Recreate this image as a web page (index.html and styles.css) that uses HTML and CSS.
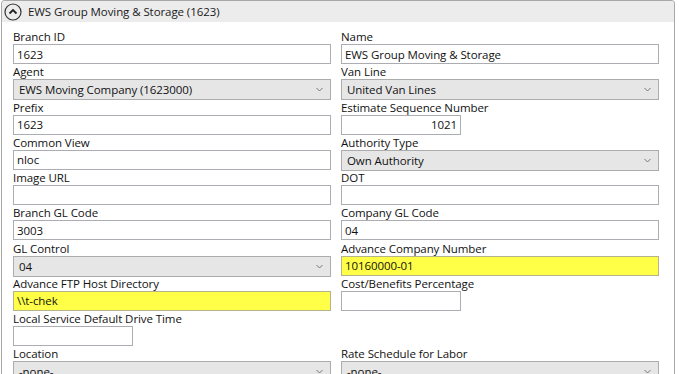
FILE: index.html
```html
<!DOCTYPE html>
<html lang="en">
<head>
    <meta charset="UTF-8">
    <title>Branch - EWS Group Moving &amp; Storage</title>
    <link rel="stylesheet" href="styles.css">
</head>
<body>
    <div class="panel">
        <div class="panel-header">
            <svg class="collapse-icon" width="18" height="18" viewBox="0 0 18 18">
                <circle cx="9" cy="9" r="8" fill="none" stroke="#333" stroke-width="1.2"/>
                <path d="M5.5 10.5 L9 7 L12.5 10.5" fill="none" stroke="#222" stroke-width="1.8"/>
            </svg>
            <span class="panel-title">EWS Group Moving &amp; Storage (1623)</span>
        </div>

        <div class="form-grid">
            <div class="field">
                <label>Branch ID</label>
                <input type="text" value="1623">
            </div>
            <div class="field">
                <label>Name</label>
                <input type="text" value="EWS Group Moving &amp; Storage">
            </div>

            <div class="field">
                <label>Agent</label>
                <div class="combo"><span>EWS Moving Company (1623000)</span><svg width="7" height="5" viewBox="0 0 7 5"><path d="M0.5 1 L3.5 4 L6.5 1" fill="none" stroke="#777" stroke-width="1"/></svg></div>
            </div>
            <div class="field">
                <label>Van Line</label>
                <div class="combo"><span>United Van Lines</span><svg width="7" height="5" viewBox="0 0 7 5"><path d="M0.5 1 L3.5 4 L6.5 1" fill="none" stroke="#777" stroke-width="1"/></svg></div>
            </div>

            <div class="field">
                <label>Prefix</label>
                <input type="text" value="1623">
            </div>
            <div class="field">
                <label>Estimate Sequence Number</label>
                <input type="text" class="short number" value="1021">
            </div>

            <div class="field">
                <label>Common View</label>
                <input type="text" value="nloc">
            </div>
            <div class="field">
                <label>Authority Type</label>
                <div class="combo"><span>Own Authority</span><svg width="7" height="5" viewBox="0 0 7 5"><path d="M0.5 1 L3.5 4 L6.5 1" fill="none" stroke="#777" stroke-width="1"/></svg></div>
            </div>

            <div class="field">
                <label>Image URL</label>
                <input type="text" value="">
            </div>
            <div class="field">
                <label>DOT</label>
                <input type="text" value="">
            </div>

            <div class="field">
                <label>Branch GL Code</label>
                <input type="text" value="3003">
            </div>
            <div class="field">
                <label>Company GL Code</label>
                <input type="text" value="04">
            </div>

            <div class="field">
                <label>GL Control</label>
                <div class="combo"><span>04</span><svg width="7" height="5" viewBox="0 0 7 5"><path d="M0.5 1 L3.5 4 L6.5 1" fill="none" stroke="#777" stroke-width="1"/></svg></div>
            </div>
            <div class="field">
                <label>Advance Company Number</label>
                <input type="text" class="highlight" value="10160000-01">
            </div>

            <div class="field">
                <label>Advance FTP Host Directory</label>
                <input type="text" class="highlight" value="\\t-chek">
            </div>
            <div class="field">
                <label>Cost/Benefits Percentage</label>
                <input type="text" class="short" value="">
            </div>

            <div class="field">
                <label>Local Service Default Drive Time</label>
                <input type="text" class="short" value="">
            </div>
            <div class="field"></div>

            <div class="field">
                <label>Location</label>
                <div class="combo"><span>-none-</span><svg width="7" height="5" viewBox="0 0 7 5"><path d="M0.5 1 L3.5 4 L6.5 1" fill="none" stroke="#777" stroke-width="1"/></svg></div>
            </div>
            <div class="field">
                <label>Rate Schedule for Labor</label>
                <div class="combo"><span>-none-</span><svg width="7" height="5" viewBox="0 0 7 5"><path d="M0.5 1 L3.5 4 L6.5 1" fill="none" stroke="#777" stroke-width="1"/></svg></div>
            </div>
        </div>
    </div>
</body>
</html>
```

FILE: styles.css
```css
body {
    margin: 0;
    background-color: #fff;
    font-family: "Open Sans", "Noto Sans", sans-serif;
    font-size: 11.5px;
    letter-spacing: -0.08px;
    color: #111;
    overflow: hidden;
}

.panel {
    margin-left: 1px;
    width: 672px;
    height: 400px;
    border: 1px solid #a8a8a8;
    border-bottom: none;
    border-radius: 4px 4px 0 0;
    background-color: #fff;
}

.panel-header {
    height: 21px;
    background-color: #ececec;
    border-radius: 3px 3px 0 0;
    display: flex;
    align-items: center;
    padding-left: 2px;
}

.collapse-icon {
    margin-right: 6px;
}

.panel-title {
    font-size: 11.5px;
    color: #1a1a1a;
}

.form-grid {
    display: grid;
    grid-template-columns: 318px 318px;
    grid-auto-rows: 35.25px;
    column-gap: 10px;
    padding: 7px 0 0 11px;
}

.field label {
    display: block;
    height: 15px;
    line-height: 15px;
    white-space: nowrap;
}

.field input {
    display: block;
    box-sizing: border-box;
    width: 100%;
    height: 20px;
    margin: 0;
    padding: 0 3px;
    border: 1px solid #abadb3;
    border-radius: 0;
    font-family: inherit;
    font-size: 11.5px;
    letter-spacing: -0.08px;
    color: #111;
    background-color: #fff;
    outline: none;
}

.field input.short {
    width: 120px;
}

.field input.number {
    text-align: right;
}

.field input.highlight {
    background-color: #ffff48;
    border-color: #b4b48c;
}

.combo {
    box-sizing: border-box;
    height: 21px;
    display: flex;
    align-items: center;
    justify-content: space-between;
    padding: 0 7px 0 5px;
    border: 1px solid #acacac;
    background-color: #e6e6e6;
}
```
